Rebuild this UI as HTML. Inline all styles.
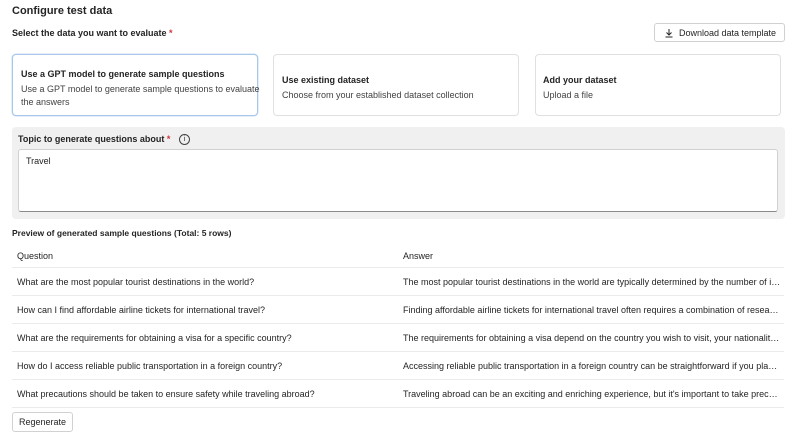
<!DOCTYPE html>
<html><head><style>
body{margin:0;width:800px;height:435px;background:#fff;font-family:"Liberation Sans",sans-serif;color:#242424;position:relative;overflow:hidden;font-size:9px}
.a{position:absolute;white-space:nowrap}
.b{font-weight:bold}
.card{position:absolute;top:54px;height:62px;border:1px solid #e0e0e0;border-radius:4px;box-sizing:border-box;background:#fff}
.card .t{position:absolute;left:10px;font-weight:bold;font-size:9px;white-space:nowrap}
.card .d{position:absolute;left:10px;color:#424242;font-size:9px;line-height:13px;white-space:nowrap}
.row{position:absolute;left:12px;width:772px;height:28px;border-bottom:1px solid #ebebeb;box-sizing:border-box}
.row span{position:absolute;top:9px;white-space:nowrap;overflow:hidden;text-overflow:ellipsis}
.q{left:5px}.an{left:391px;width:378px}
.r{color:#d13438}
</style></head><body>
<div class="a b" style="left:12px;top:5px;font-size:11px">Configure test data</div>
<div class="a b" style="left:12px;top:28px;font-size:9px">Select the data you want to evaluate <span class="r">*</span></div>
<div class="a" style="left:654px;top:23px;width:131px;height:19px;border:1px solid #d1d1d1;border-radius:3px;box-sizing:border-box">
<svg style="position:absolute;left:9px;top:4px" width="10" height="10" viewBox="0 0 10 10"><path d="M5 1v6M2.5 4.5L5 7l2.5-2.5M1.5 9h7" stroke="#242424" stroke-width="1" fill="none"/></svg>
<span style="position:absolute;left:24px;top:4px">Download data template</span></div>
<div class="card" style="left:12px;width:246px;border-color:#a9c7ea;box-shadow:0 0 0 0.5px #c7dcf3"><div class="t" style="top:14px;left:8px">Use a GPT model to generate sample questions</div><div class="d" style="top:28px;left:8px">Use a GPT model to generate sample questions to evaluate<br>the answers</div></div>
<div class="card" style="left:273px;width:246px"><div class="t" style="top:20px;left:8px">Use existing dataset</div><div class="d" style="top:34px;left:8px">Choose from your established dataset collection</div></div>
<div class="card" style="left:535px;width:246px"><div class="t" style="top:20px;left:7px">Add your dataset</div><div class="d" style="top:34px;left:7px">Upload a file</div></div>
<div class="a" style="left:12px;top:127px;width:773px;height:92px;background:#f0f0f0;border-radius:4px"></div>
<div class="a b" style="left:18px;top:134px">Topic to generate questions about <span class="r">*</span></div>
<div class="a" style="left:179px;top:134px;width:9px;height:9px;border:1px solid #424242;border-radius:50%;font-size:7px;text-align:center;line-height:9px">i</div>
<div class="a" style="left:18px;top:149px;width:760px;height:63px;background:#fff;border:1px solid #d1d1d1;border-bottom-color:#8a8a8a;border-radius:3px;box-sizing:border-box"><span style="position:absolute;left:7px;top:6px">Travel</span></div>
<div class="a b" style="left:12px;top:228px;font-size:8.5px">Preview of generated sample questions (Total: 5 rows)</div>
<div class="row" style="top:242px;height:26px"><span class="q" style="top:9px">Question</span><span class="an" style="top:9px">Answer</span></div>
<div class="row" style="top:268px"><span class="q">What are the most popular tourist destinations in the world?</span><span class="an">The most popular tourist destinations in the world are typically determined by the number of in...</span></div>
<div class="row" style="top:296px"><span class="q">How can I find affordable airline tickets for international travel?</span><span class="an">Finding affordable airline tickets for international travel often requires a combination of researc...</span></div>
<div class="row" style="top:324px"><span class="q">What are the requirements for obtaining a visa for a specific country?</span><span class="an">The requirements for obtaining a visa depend on the country you wish to visit, your nationality, ...</span></div>
<div class="row" style="top:352px"><span class="q">How do I access reliable public transportation in a foreign country?</span><span class="an">Accessing reliable public transportation in a foreign country can be straightforward if you plan ...</span></div>
<div class="row" style="top:380px"><span class="q">What precautions should be taken to ensure safety while traveling abroad?</span><span class="an">Traveling abroad can be an exciting and enriching experience, but it's important to take precaut...</span></div>
<div class="a" style="left:12px;top:412px;width:61px;height:20px;border:1px solid #d1d1d1;border-radius:3px;box-sizing:border-box;text-align:center;line-height:18px">Regenerate</div>
</body></html>
